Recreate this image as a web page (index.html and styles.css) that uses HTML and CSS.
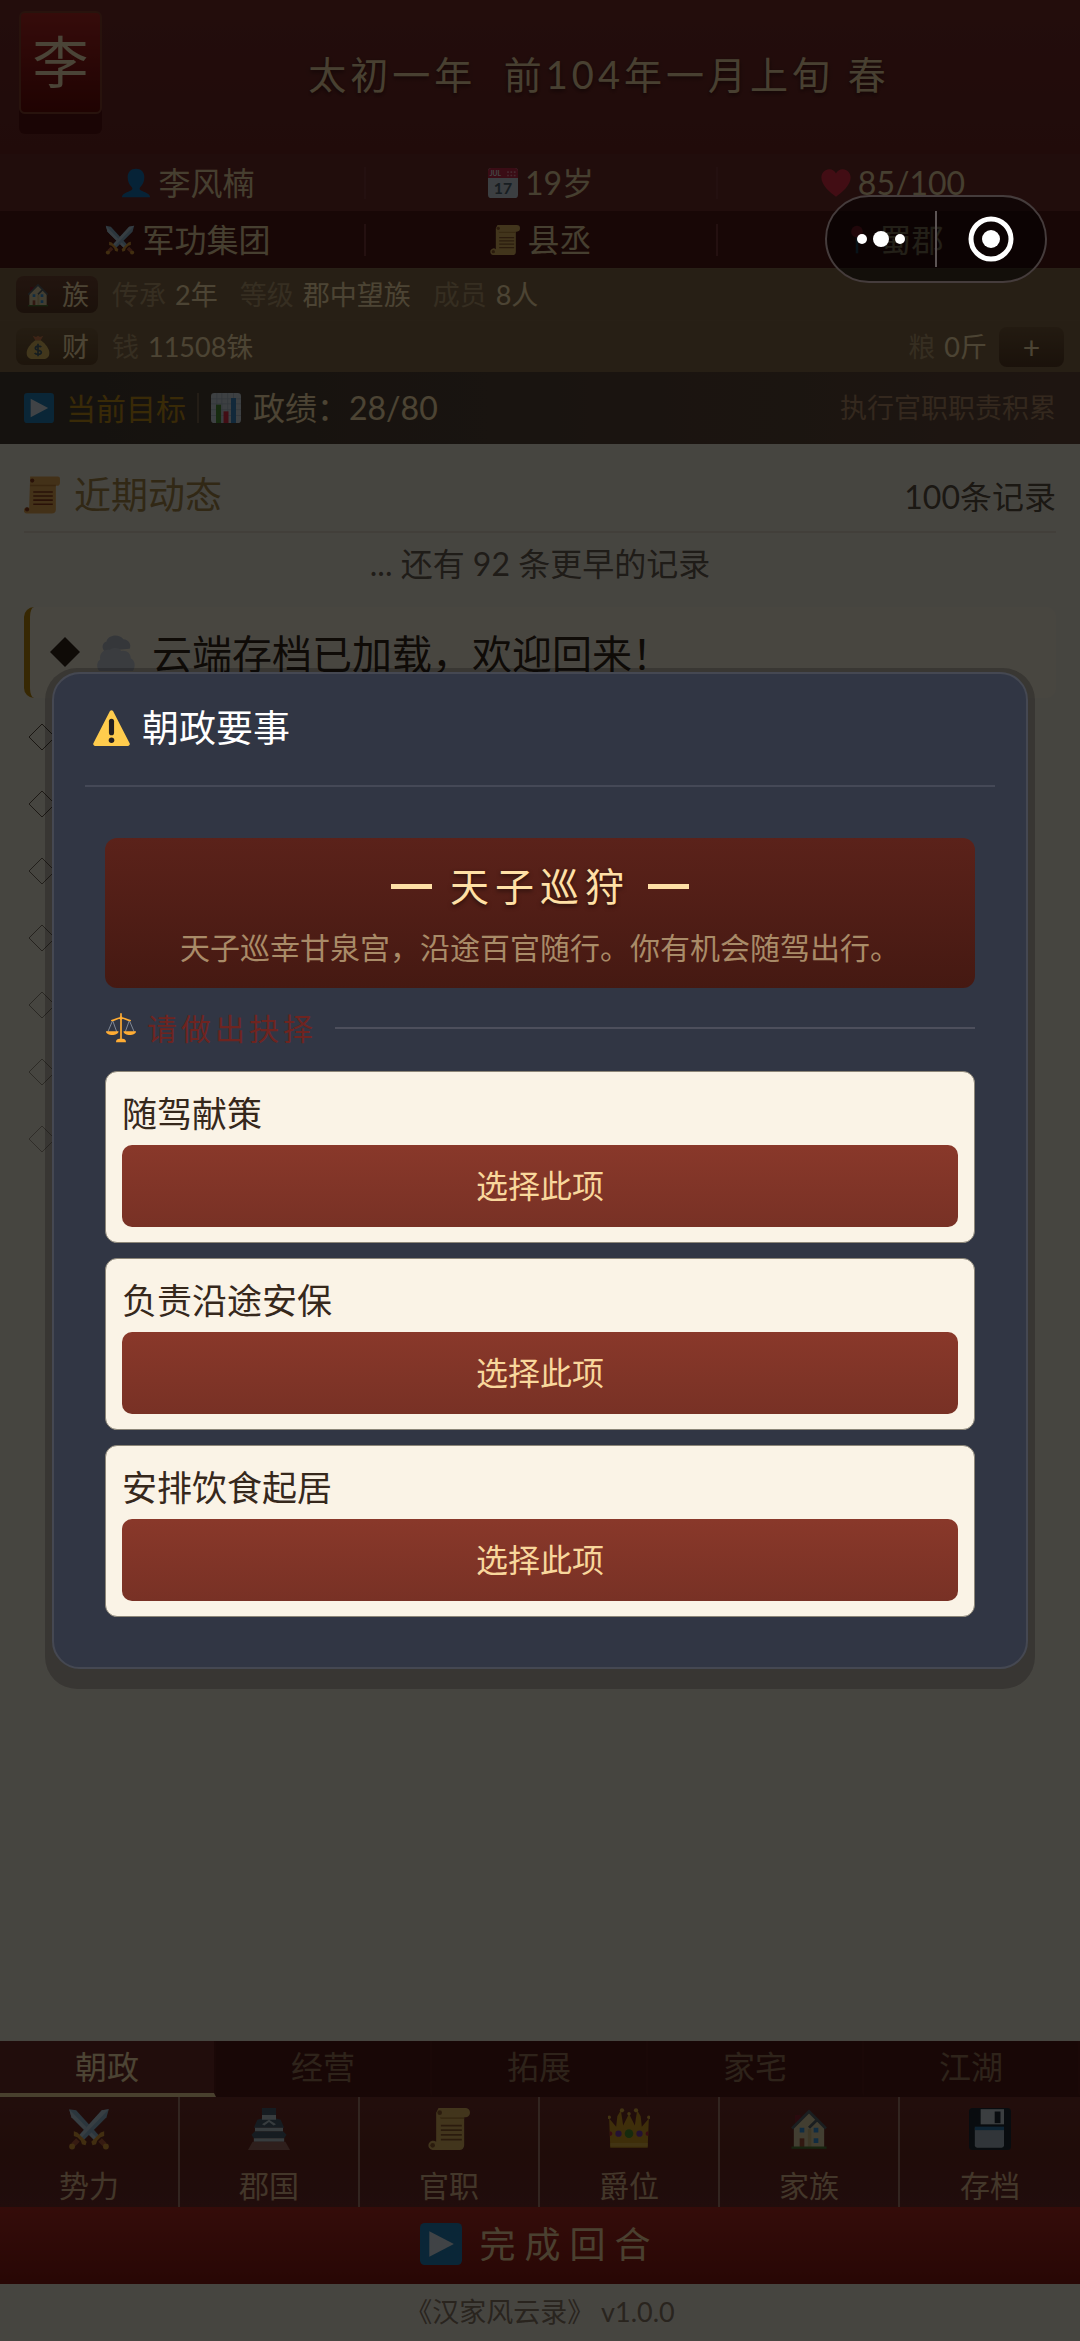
FILE: index.html
```html
<!DOCTYPE html>
<html lang="zh-CN">
<head>
    <meta charset="UTF-8" />
    <meta name="viewport" content="width=device-width, initial-scale=1" />
    <title>汉家风云录</title>
    <link rel="stylesheet" href="styles.css">
</head>
<body>

<!-- icon set -->
<svg class="sprite" aria-hidden="true">
    <symbol id="i-person" viewBox="0 0 36 36">
        <path fill="#1577b8" d="M18 1c-6 0-10 4-10 10 0 5 2 9 5 12 1 1 1 3-1 4-4 2-10 3-11 8h34c-1-5-7-6-11-8-2-1-2-3-1-4 3-3 5-7 5-12 0-6-4-10-10-10z"/>
    </symbol>
    <symbol id="i-heart" viewBox="0 0 36 36">
        <path fill="#dd2e44" d="M35.5 11.5c0-5.500-4-10-9.500-10-3.500 0-6.500 2-8 5-1.500-3-4.500-5-8-5-5.500 0-9.500 4.500-9.500 10 0 9.500 11 18.500 17.500 23 6.500-4.500 17.500-13.500 17.500-23z"/>
    </symbol>
    <symbol id="i-swords" viewBox="0 0 36 36">
        <path fill="#8fb4cd" d="M1 1l6 1 20 22-4 4L3 8z"/>
        <path fill="#b7cfde" d="M1 1l2 7 20 20 2-2z"/>
        <path fill="#8fb4cd" d="M35 1l-6 1L9 24l4 4L33 8z"/>
        <path fill="#b7cfde" d="M35 1l-6 1L9 24l2 2z"/>
        <path fill="#dc9a38" d="M5 20l3 1 8 8-1 3-3-1-1-3-3-3-3-1zM31 20l-3 1-8 8 1 3 3-1 1-3 3-3 3-1z"/>
        <path fill="#b55b3b" d="M7 26l3 3-4 4-3-3zM29 26l-3 3 4 4 3-3z"/>
        <circle cx="3.500" cy="33" r="2.500" fill="#dc9a38"/><circle cx="32.500" cy="33" r="2.500" fill="#dc9a38"/>
    </symbol>
    <symbol id="i-scroll" viewBox="0 0 36 36">
        <path fill="#dcb260" d="M9 0h23a4 4 0 0 1 0 8h-1v24a4 4 0 0 1-4 4H4a4 4 0 1 1 3-7V4z"/>
        <path fill="#b98a3e" d="M10 8h21v1.500H11z"/>
        <circle cx="10" cy="4" r="2" fill="#8f5d2c"/><circle cx="4" cy="32" r="2" fill="#8f5d2c"/>
        <path stroke="#8f5d2c" stroke-width="1.500" d="M11 15h18M11 19h18M11 23h18M11 27h18"/>
    </symbol>
    <symbol id="i-scroll-warm" viewBox="0 0 36 36">
        <path fill="#dfa552" d="M6 0h27a2 2 0 0 1 2 2v4a3 3 0 0 1-3 3l-1 0v23a4 4 0 0 1-4 4H3a3 3 0 1 1 2-5z"/>
        <path fill="#c08038" d="M6 8h25v1.500H6z"/>
        <circle cx="8" cy="4" r="2" fill="#8a3a1c"/><circle cx="3" cy="32" r="2" fill="#8a3a1c"/>
        <path stroke="#8a3a1c" stroke-width="1.500" d="M9 15h19M9 19h19M9 23h19M9 27h19"/>
    </symbol>
    <symbol id="i-pin" viewBox="0 0 36 36">
        <path stroke="#3a7fa8" stroke-width="3" d="M18 14v20"/>
        <circle cx="18" cy="8" r="7" fill="#dd2e44"/>
    </symbol>
    <symbol id="i-house" viewBox="0 0 36 36">
        <path fill="#8c2430" d="M6 6h5v10H6z"/>
        <path fill="#ddd0a4" d="M5 16L18 3l13 13v18H5z"/>
        <path fill="#ccb880" d="M17 18l3 0v16h-3z"/>
        <path fill="none" stroke="#59646b" stroke-width="2.500" d="M3.500 17.500L18 3l14.500 14.500M18 17l7-7"/>
        <path fill="#3b94d9" d="M10 17h4v4h-4zm12 0h4v4h-4zm0 9h4v4h-4z"/>
        <path fill="#a5533a" d="M10 26h4v8h-4z"/>
        <path fill="#4d7a34" d="M3 33h30v2H3z"/>
    </symbol>
    <symbol id="i-money" viewBox="0 0 36 36">
        <path fill="#dcba60" d="M14 8C6 14 1 21 1 27c0 6 4 9 9 9h16c5 0 9-3 9-9 0-6-5-13-13-19z"/>
        <path fill="#cf7a4c" d="M10 1l5 2 3-2 3 2 5-2-4 7h-8z"/>
        <path fill="none" stroke="#46606b" stroke-width="2.500" d="M23 18c-2-2-9-2-9 2s9 2 9 6-8 4-10 1M18 13v19"/>
    </symbol>
    <symbol id="i-play" viewBox="0 0 36 36">
        <rect width="36" height="36" rx="4" fill="#2380b8"/>
        <path fill="#d8e2ea" d="M8 7l21 11L8 29z"/>
    </symbol>
    <symbol id="i-chart" viewBox="0 0 36 36">
        <rect width="36" height="36" rx="4" fill="#ccd6dd"/>
        <path stroke="#aab8c4" d="M7 0v36M13 0v36M20 0v36M27 0v36M0 7h36M0 13h36M0 20h36M0 27h36"/>
        <path fill="#4f8f38" d="M6 14h6v22H6z"/><path fill="#dd2e44" d="M15 22h6v14h-6z"/><path fill="#3b88c3" d="M24 6h6v30h-6z"/>
    </symbol>
    <symbol id="i-cloud" viewBox="0 0 36 36">
        <path fill="#b2bac4" d="M7 17C4 14 5 9 9 8c1-6 12-8 16-2 5 0 8 5 6 9z"/>
        <path fill="#c2c9d2" d="M2 36c-3-4-2-9 1-11-1-6 4-10 9-9 4-3 9-2 11 1 5-1 9 2 9 7 4 2 5 8 2 12z"/>
    </symbol>
    <symbol id="i-warning" viewBox="0 0 36 36">
        <path fill="#ffcc4d" d="M16.500 1.500a2 2 0 0 1 3 0l16 31a2 2 0 0 1-2 3H2.500a2 2 0 0 1-2-3z"/>
        <rect x="15.500" y="9" width="5" height="16" rx="2.500" fill="#231f20"/>
        <circle cx="18" cy="30" r="2.700" fill="#231f20"/>
    </symbol>
    <symbol id="i-scales" viewBox="0 0 36 36">
        <path fill="none" stroke="#8f99a6" stroke-width="1" d="M8 9L2 23M8 9l5 14M28 9l-5 14M28 9l6 14"/>
        <path fill="none" stroke="#ffac33" stroke-width="2" stroke-linecap="round" d="M18 1v31M7 9c4 0 6-3 11-3s7 3 11 3"/>
        <path fill="#ffac33" d="M0 22h15c0 6-15 6-15 0zM21 22h15c0 6-15 6-15 0zM12 35c0-3 2-4 4-4h4c2 0 4 1 4 4z"/>
        <circle cx="18" cy="6" r="2" fill="#ffac33"/>
    </symbol>
    <symbol id="i-castle" viewBox="0 0 36 36">
        <path fill="#4b6070" d="M12 0h12v6H12zM8 10l4-1h12l4 1 3 7H5zM3 23l3-3h24l3 3-2 3H5z"/>
        <path fill="#b8c8d0" d="M12 6h12v4H12zM6 17h24v3H6zM5 26h26v3H5zM12 14l6-4 6 4-2 1-4-3-4 3z"/>
        <path fill="#9d6a5e" d="M4 29h28l4 7H0z"/>
    </symbol>
    <symbol id="i-crown" viewBox="0 0 36 36">
        <path fill="#d09a24" d="M2 34L1 9l6 7 1-9 3-5 2 13 5-10 5 10 2-13 3 5 1 9 6-7-1 25z"/>
        <path fill="#dcae40" d="M2 30h32v3H2z"/>
        <circle cx="1" cy="8" r="1.500" fill="#dcae40"/><circle cx="12" cy="2" r="1.800" fill="#dcae40"/><circle cx="18" cy="5" r="1.500" fill="#dcae40"/><circle cx="24" cy="2" r="1.800" fill="#dcae40"/><circle cx="35" cy="8" r="1.500" fill="#dcae40"/>
        <circle cx="18" cy="22" r="3.700" fill="#4c8c2c"/><circle cx="9" cy="22" r="2.700" fill="#7b3fa8"/><circle cx="27" cy="22" r="2.700" fill="#7b3fa8"/>
        <path fill="#c02a3c" d="M1.500 20c3 0 3 4 0 4zM34.500 20c-3 0-3 4 0 4z"/>
    </symbol>
    <symbol id="i-floppy" viewBox="0 0 36 36">
        <path fill="#1f2b33" d="M3 0h30a3 3 0 0 1 3 3v30a3 3 0 0 1-3 3H3a3 3 0 0 1-3-3V3a3 3 0 0 1 3-3z"/>
        <path fill="#c6d0d8" d="M10 1h20v13H10z"/><path fill="#1f2b33" d="M22 3h5v10h-5z"/>
        <path fill="#a4b3be" d="M5 17h25v15a2 2 0 0 1-2 2H7a2 2 0 0 1-2-2z"/><path fill="#2f7aac" d="M5 16h25v3H5z"/>
    </symbol>
</svg>

<div class="page">
    <header>
        <div class="top">
            <div class="seal">李</div>
            <h1>太初一年&nbsp; 前104年一月上旬 春</h1>
        </div>
        <div class="stats">
            <div class="stat"><svg class="icon"><use href="#i-person"/></svg>李风楠</div>
            <div class="stat">
                <svg class="icon" viewBox="0 0 36 36">
                    <rect width="36" height="36" rx="4" fill="#c8d3dc"/>
                    <path fill="#c22a48" d="M4 0h28a4 4 0 0 1 4 4v8H0V4a4 4 0 0 1 4-4z"/>
                    <path fill="#e88a9c" d="M23 4h2v2h-2zm4 0h2v2h-2zm4 0h2v2h-2zm-8 4h2v2h-2zm4 0h2v2h-2zm4 0h2v2h-2z"/>
                    <text class="cal-month" x="2" y="10">JUL</text>
                    <text class="cal-day" x="18" y="31" text-anchor="middle">17</text>
                </svg>19岁
            </div>
            <div class="stat"><svg class="icon"><use href="#i-heart"/></svg>85/100</div>
        </div>
        <div class="stats stats-dark">
            <div class="stat"><svg class="icon"><use href="#i-swords"/></svg>军功集团</div>
            <div class="stat"><svg class="icon"><use href="#i-scroll"/></svg>县丞</div>
            <div class="stat"><svg class="icon"><use href="#i-pin"/></svg>蜀郡</div>
        </div>
    </header>

    <section class="assets">
        <div class="asset-row">
            <span class="badge badge-clan"><svg class="icon-small"><use href="#i-house"/></svg>族</span>
            <span class="pair"><span class="dim">传承</span>2年</span>
            <span class="pair"><span class="dim">等级</span>郡中望族</span>
            <span class="pair"><span class="dim">成员</span>8人</span>
        </div>
        <div class="asset-row">
            <span class="badge"><svg class="icon-small"><use href="#i-money"/></svg>财</span>
            <span class="pair"><span class="dim">钱</span>11508铢</span>
            <span class="pair pair-right"><span class="dim">粮</span>0斤</span>
            <button class="add" type="button" aria-label="购粮">+</button>
        </div>
    </section>

    <section class="goal">
        <svg class="icon"><use href="#i-play"/></svg>
        <span class="goal-label">当前目标</span>
        <svg class="icon"><use href="#i-chart"/></svg>
        <span class="goal-value">政绩：28/80</span>
        <span class="goal-hint">执行官职职责积累</span>
    </section>

    <main>
        <div class="log-head">
            <h2><svg class="icon-mid"><use href="#i-scroll-warm"/></svg>近期动态</h2>
            <span class="log-count">100条记录</span>
        </div>
        <p class="log-more">... 还有 92 条更早的记录</p>
        <div class="log-latest">
            <svg class="diamond-full" viewBox="0 0 30 30"><path d="M15 0l15 15-15 15L0 15z"/></svg>
            <svg class="icon-cloud"><use href="#i-cloud"/></svg>
            <span>云端存档已加载，欢迎回来！</span>
        </div>
        <ul class="log-list" id="log-list"></ul>
    </main>

    <nav>
        <div class="tabs">
            <button class="tab active" type="button">朝政</button>
            <button class="tab" type="button">经营</button>
            <button class="tab" type="button">拓展</button>
            <button class="tab" type="button">家宅</button>
            <button class="tab" type="button">江湖</button>
        </div>
        <div class="menu">
            <button class="menu-item" type="button"><svg class="icon-large"><use href="#i-swords"/></svg>势力</button>
            <button class="menu-item" type="button"><svg class="icon-large"><use href="#i-castle"/></svg>郡国</button>
            <button class="menu-item" type="button"><svg class="icon-large"><use href="#i-scroll"/></svg>官职</button>
            <button class="menu-item" type="button"><svg class="icon-large"><use href="#i-crown"/></svg>爵位</button>
            <button class="menu-item" type="button"><svg class="icon-large"><use href="#i-house"/></svg>家族</button>
            <button class="menu-item" type="button"><svg class="icon-large"><use href="#i-floppy"/></svg>存档</button>
        </div>
        <button class="end-turn" type="button"><svg class="icon-large"><use href="#i-play"/></svg>完成回合</button>
    </nav>
    <footer>《汉家风云录》 v1.0.0</footer>
</div>

<div class="overlay">
    <div class="modal-shell">
        <div class="modal" role="dialog" aria-labelledby="modal-title">
            <h2 class="modal-title" id="modal-title"><svg class="icon-mid"><use href="#i-warning"/></svg>朝政要事</h2>
            <div class="modal-body">
                <div class="event">
                    <h3>天子巡狩</h3>
                    <p>天子巡幸甘泉宫，沿途百官随行。你有机会随驾出行。</p>
                </div>
                <div class="choose"><svg class="icon-choose"><use href="#i-scales"/></svg>请做出抉择</div>
                <div class="options">
                    <div class="option">
                        <h4>随驾献策</h4>
                        <button type="button">选择此项</button>
                    </div>
                    <div class="option">
                        <h4>负责沿途安保</h4>
                        <button type="button">选择此项</button>
                    </div>
                    <div class="option">
                        <h4>安排饮食起居</h4>
                        <button type="button">选择此项</button>
                    </div>
                </div>
            </div>
        </div>
    </div>
</div>

<div class="capsule">
    <button class="capsule-more" type="button" aria-label="更多">
        <svg viewBox="0 0 48 20"><circle cx="5" cy="10" r="5"/><circle cx="24" cy="10" r="8"/><circle cx="43" cy="10" r="5"/></svg>
    </button>
    <button class="capsule-close" type="button" aria-label="关闭">
        <svg viewBox="0 0 46 46"><circle class="ring" cx="23" cy="23" r="20"/><circle cx="23" cy="23" r="9"/></svg>
    </button>
</div>

<script>
    const list = document.getElementById("log-list");
    // older records fade out
    [0.8, 0.75, 0.65, 0.6, 0.5, 0.45, 0.4].forEach(o => {
        const li = document.createElement("li");
        li.style.opacity = o;
        li.innerHTML = `<svg class="diamond" viewBox="0 0 28 28"><path d="M14 1l13 13-13 13L1 14z"/></svg>`;
        list.appendChild(li);
    });
</script>

</body>
</html>
```
FILE: styles.css
```css
* {
    box-sizing: border-box;
}

body {
    margin: 0;
    font-family: Lato, "Noto Sans CJK SC", sans-serif;
    font-size: 32px;
    background: #ece6d8;
    color: #ffe3ad;
}

h1, h2, h3, h4, p, ul {
    margin: 0;
    padding: 0;
    font-weight: 400;
}

button {
    margin: 0;
    padding: 0;
    border: 0;
    background: none;
    color: inherit;
    font: inherit;
}

svg {
    flex: none;
    display: block;
}

.sprite {
    position: absolute;
    width: 0;
    height: 0;
}

.icon { width: 30px; height: 30px; }
.icon-small { width: 24px; height: 28px; }
.icon-mid { width: 37px; height: 38px; }
.icon-large { width: 42px; height: 42px; }
.icon-choose { width: 32px; height: 30px; }
.icon-cloud { width: 42px; height: 38px; }

.cal-month { font: 700 8px Lato, sans-serif; fill: #e4e4e4; }
.cal-day { font: 700 19px Lato, sans-serif; fill: #4f6270; }

.page {
    display: flex;
    flex-direction: column;
    min-height: 100vh;
}

/* header */
header {
    background: linear-gradient(#762d29, #682220);
}

.top {
    display: flex;
    height: 154px;
    padding: 11px 0 0 19px;
    gap: 16px;
}

.seal {
    display: flex;
    align-items: center;
    justify-content: center;
    width: 83px;
    height: 103px;
    padding-bottom: 8px;
    border: 2px solid #85402e;
    border-radius: 6px;
    background: linear-gradient(#b32824, #6b0a08);
    box-shadow: 0 20px 0 #581312;
    font-size: 56px;
    color: #f8e4b8;
}

.top h1 {
    flex: 1;
    padding-top: 33px;
    text-align: center;
    font-size: 38px;
    line-height: 60px;
    letter-spacing: 4px;
    color: #f0d8a4;
    text-shadow: 0 2px 4px rgba(0, 0, 0, 0.5);
}

.stats {
    display: grid;
    grid-template-columns: repeat(3, 1fr);
    align-items: center;
    height: 57px;
    padding: 0 12px;
    background: #702c2a;
    color: #ead4a0;
}

.stats-dark {
    background: #501917;
}

.stat {
    display: flex;
    align-items: center;
    justify-content: center;
    gap: 7px;
    height: 32px;
    line-height: 30px;
}

.stat + .stat {
    border-left: 2px solid #7a3836;
}

/* family and money */
.assets {
    background: #836847;
    font-size: 27px;
}

.asset-row {
    display: flex;
    align-items: center;
    gap: 22px;
    height: 52px;
    padding: 0 16px;
    border-top: 1px solid #886d4a;
    line-height: 38px;
}

.badge {
    display: flex;
    align-items: center;
    gap: 12px;
    height: 37px;
    padding: 0 9px 0 10px;
    margin-right: -8px;
    border-radius: 8px;
    background: linear-gradient(#7d623f, #634729);
    line-height: 34px;
}

.badge-clan {
    background: linear-gradient(#754733, #5b3a25);
}

.pair {
    display: flex;
    gap: 9px;
}

.dim {
    color: #b49a70;
}

.pair-right {
    margin-left: auto;
}

.add {
    width: 65px;
    height: 40px;
    margin-left: -10px;
    border-radius: 8px;
    background: linear-gradient(#765a3a, #593c24);
    font-size: 30px;
    line-height: 36px;
}

.goal {
    display: flex;
    align-items: center;
    gap: 12px;
    height: 72px;
    padding: 0 24px;
    background: linear-gradient(90deg, #463e33, #65493a);
    line-height: 40px;
}

.goal-label {
    padding-right: 11px;
    border-right: 2px solid #75624c;
    font-size: 30px;
    line-height: 30px;
    color: #c08c1a;
}

.goal-hint {
    margin-left: auto;
    font-size: 27px;
    color: #ad8864;
}

/* records */
main {
    flex: 1;
    padding: 24px 24px 0;
}

.log-head {
    display: flex;
    align-items: center;
    justify-content: space-between;
    height: 65px;
    padding-bottom: 10px;
    border-bottom: 2px solid #dcd3c4;
}

.log-head h2 {
    display: flex;
    align-items: center;
    gap: 13px;
    font-size: 37px;
    line-height: 44px;
    color: #a58748;
}

.log-count {
    font-size: 32px;
    color: #5c5042;
}

.log-more {
    padding: 9px 0 21px;
    text-align: center;
    line-height: 44px;
    color: #6a5e50;
}

.log-latest {
    display: flex;
    align-items: center;
    gap: 15px;
    height: 91px;
    padding: 0 0 2px 20px;
    border-left: 6px solid #b8860b;
    border-radius: 10px;
    background: #f2ebd8;
    font-size: 40px;
    color: #33261a;
}

.diamond-full {
    width: 30px;
    height: 30px;
    fill: #33261a;
}

.log-list {
    list-style: none;
    padding: 5px 0 0 4px;
}

.log-list li {
    display: flex;
    align-items: center;
    height: 67px;
}

.diamond {
    width: 28px;
    height: 28px;
    fill: none;
    stroke: #33261a;
}

/* bottom navigation */
.tabs {
    display: grid;
    grid-template-columns: repeat(5, 1fr);
    background: #521a17;
}

.tab {
    height: 56px;
    border-right: 2px solid #571d19;
    border-bottom: 4px solid transparent;
    line-height: 52px;
    color: #9c7658;
}

.tab.active {
    border-bottom-color: #f5d69c;
    background: #712e29;
    color: #ffe3ad;
}

.menu {
    display: grid;
    grid-template-columns: repeat(6, 1fr);
    background: linear-gradient(#74302b, #6a2a1f 50%, #6e2c2a);
}

.menu-item {
    display: flex;
    flex-direction: column;
    align-items: center;
    gap: 15px;
    height: 110px;
    padding-top: 11px;
    border-right: 2px solid #a87c6c;
    font-size: 30px;
    line-height: 40px;
    color: #e0b88e;
}

.menu-item:last-child {
    border-right: 0;
}

.end-turn {
    display: flex;
    align-items: center;
    justify-content: center;
    gap: 17px;
    width: 100%;
    height: 77px;
    background: linear-gradient(#b02b22, #861811);
    font-size: 36px;
    line-height: 70px;
    letter-spacing: 9px;
    padding-bottom: 4px;
    color: #f8d8a0;
}

footer {
    padding: 8px 0 10px;
    text-align: center;
    font-size: 27px;
    line-height: 39px;
    color: #897a66;
}

/* event dialog */
.overlay {
    position: fixed;
    inset: 0;
    display: flex;
    align-items: center;
    padding: 16px 45px 0;
    background: rgba(0, 0, 0, 0.7);
}

.modal-shell {
    flex: 1;
    padding: 4px 7px 20px;
    border-radius: 32px;
    background: rgba(0, 0, 0, 0.22);
}

.modal {
    padding: 0 31px;
    border: 2px solid #454852;
    border-radius: 28px;
    background: #313644;
}

.modal-title {
    display: flex;
    align-items: center;
    gap: 12px;
    padding: 28px 8px 31px;
    border-bottom: 2px solid #454957;
    font-size: 37px;
    line-height: 52px;
    color: #fff;
}

.modal-body {
    padding: 51px 20px 50px;
}

.event {
    padding: 23px 20px 21px;
    border-radius: 12px;
    background: linear-gradient(#5b221a, #451912);
    text-align: center;
}

.event h3 {
    font-size: 39px;
    line-height: 50px;
    letter-spacing: 6px;
    color: #ffe0a6;
    text-shadow: 0 2px 4px rgba(0, 0, 0, 0.5);
}

.event h3::before,
.event h3::after {
    content: "";
    display: inline-block;
    width: 41px;
    height: 5px;
    margin: 0 18px 12px;
    background: #ffe0a6;
}

.event p {
    padding-top: 16px;
    font-size: 30px;
    line-height: 40px;
    color: #a98b68;
}

.choose {
    display: flex;
    align-items: center;
    gap: 10px;
    margin: 20px 0 23px;
    font-size: 30px;
    line-height: 40px;
    letter-spacing: 4px;
    color: #6e2420;
}

.choose::after {
    content: "";
    flex: 1;
    height: 2px;
    margin-left: 8px;
    background: #4d4f5c;
}

.options {
    display: grid;
    gap: 15px;
}

.option {
    padding: 19px 16px 15px;
    border: 1px solid #8c8678;
    border-radius: 12px;
    background: #faf3e6;
}

.option h4 {
    margin-bottom: 10px;
    font-size: 35px;
    line-height: 44px;
    color: #36281c;
}

.option button {
    display: block;
    width: 100%;
    height: 82px;
    padding-bottom: 5px;
    border-radius: 10px;
    background: linear-gradient(#89382a, #783125);
    color: #f8d79c;
}

/* host app buttons, float above the dialog */
.capsule {
    position: fixed;
    top: 195px;
    right: 33px;
    display: flex;
    align-items: center;
    width: 222px;
    height: 88px;
    border: 2px solid #453c3c;
    border-radius: 44px;
    background: rgba(0, 0, 0, 0.5);
    fill: #fff;
}

.capsule button {
    display: flex;
    align-items: center;
    justify-content: center;
    flex: 1;
    height: 56px;
}

.capsule .capsule-more {
    border-right: 2px solid #5c5454;
}

.capsule-more svg {
    width: 48px;
    height: 20px;
}

.capsule-close svg {
    width: 46px;
    height: 46px;
}

.ring {
    fill: none;
    stroke: #fff;
    stroke-width: 5;
}
```
